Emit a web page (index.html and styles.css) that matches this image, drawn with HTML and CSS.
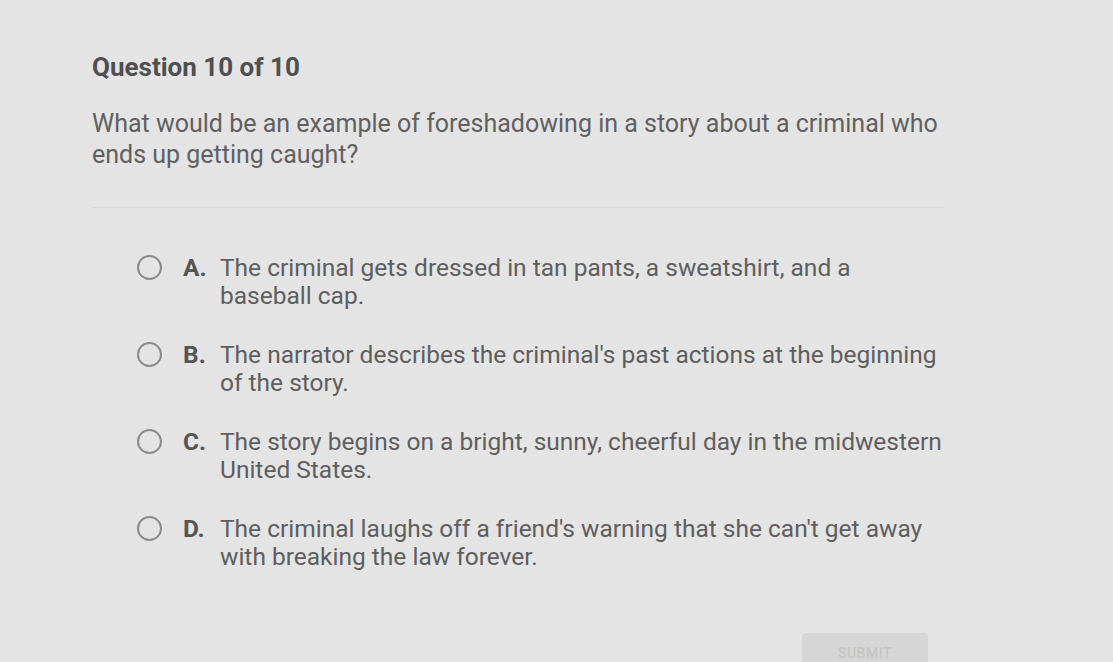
FILE: index.html
```html
<!DOCTYPE html>
<html>
<head>
<meta charset="utf-8">
<link rel="stylesheet" href="styles.css">
</head>
<body>
<main class="page">
  <h1 class="title">Question 10 of 10</h1>
  <p class="question">What would be an example of foreshadowing in a story about a criminal who ends up getting caught?</p>
  <hr class="divider">
  <ul class="options">
    <li class="option"><span class="radio"></span><span class="letter">A.</span><span class="text">The criminal gets dressed in tan pants, a sweatshirt, and a baseball cap.</span></li>
    <li class="option"><span class="radio"></span><span class="letter">B.</span><span class="text">The narrator describes the criminal's past actions at the beginning of the story.</span></li>
    <li class="option"><span class="radio"></span><span class="letter">C.</span><span class="text">The story begins on a bright, sunny, cheerful day in the midwestern United States.</span></li>
    <li class="option"><span class="radio"></span><span class="letter">D.</span><span class="text">The criminal laughs off a friend's warning that she can't get away with breaking the law forever.</span></li>
  </ul>
  <div class="actions"><button class="submit">SUBMIT</button></div>
</main>
</body>
</html>
```
FILE: styles.css
```css
html, body {
  margin: 0;
  padding: 0;
  background: #e4e4e4;
  height: 100%;
  overflow: hidden;
}
body {
  font-family: Roboto, "Liberation Sans", sans-serif;
  color: #5b5b5b;
}
.page {
  padding: 50px 0 0 92px;
  width: 855px;
}
.title {
  margin: 0;
  font-size: 26px;
  font-weight: 700;
  color: #4f4f4f;
  line-height: 34px;
}
.question {
  margin: 24px 0 0;
  font-size: 25px;
  line-height: 31px;
  color: #606060;
  width: 860px;
}
.divider {
  margin: 37px 0 0;
  border: 0;
  border-top: 1px solid #d8d8d8;
  width: 853px;
}
.options {
  list-style: none;
  margin: 46px 0 0;
  padding: 0 0 0 45px;
  display: flex;
  flex-direction: column;
  gap: 31px;
}
.option {
  display: flex;
  align-items: flex-start;
  font-size: 24.5px;
  line-height: 28px;
}
.radio {
  flex: none;
  width: 21px;
  height: 21px;
  border: 2px solid #8a8a8a;
  border-radius: 50%;
  margin-top: 1px;
}
.letter {
  flex: none;
  width: 37px;
  margin-left: 21px;
  font-weight: 700;
  color: #555;
}
.text {
  width: 728px;
  color: #5e5e5e;
}
.actions {
  display: flex;
  justify-content: flex-end;
  width: 836px;
  margin-top: 62px;
}
.submit {
  width: 126px;
  height: 40px;
  border: 0;
  border-radius: 4px;
  background: #d6d6d6;
  color: #c4c4c4;
  font-family: Roboto, "Liberation Sans", sans-serif;
  font-size: 14px;
  font-weight: 500;
  letter-spacing: 0.5px;
}
```
